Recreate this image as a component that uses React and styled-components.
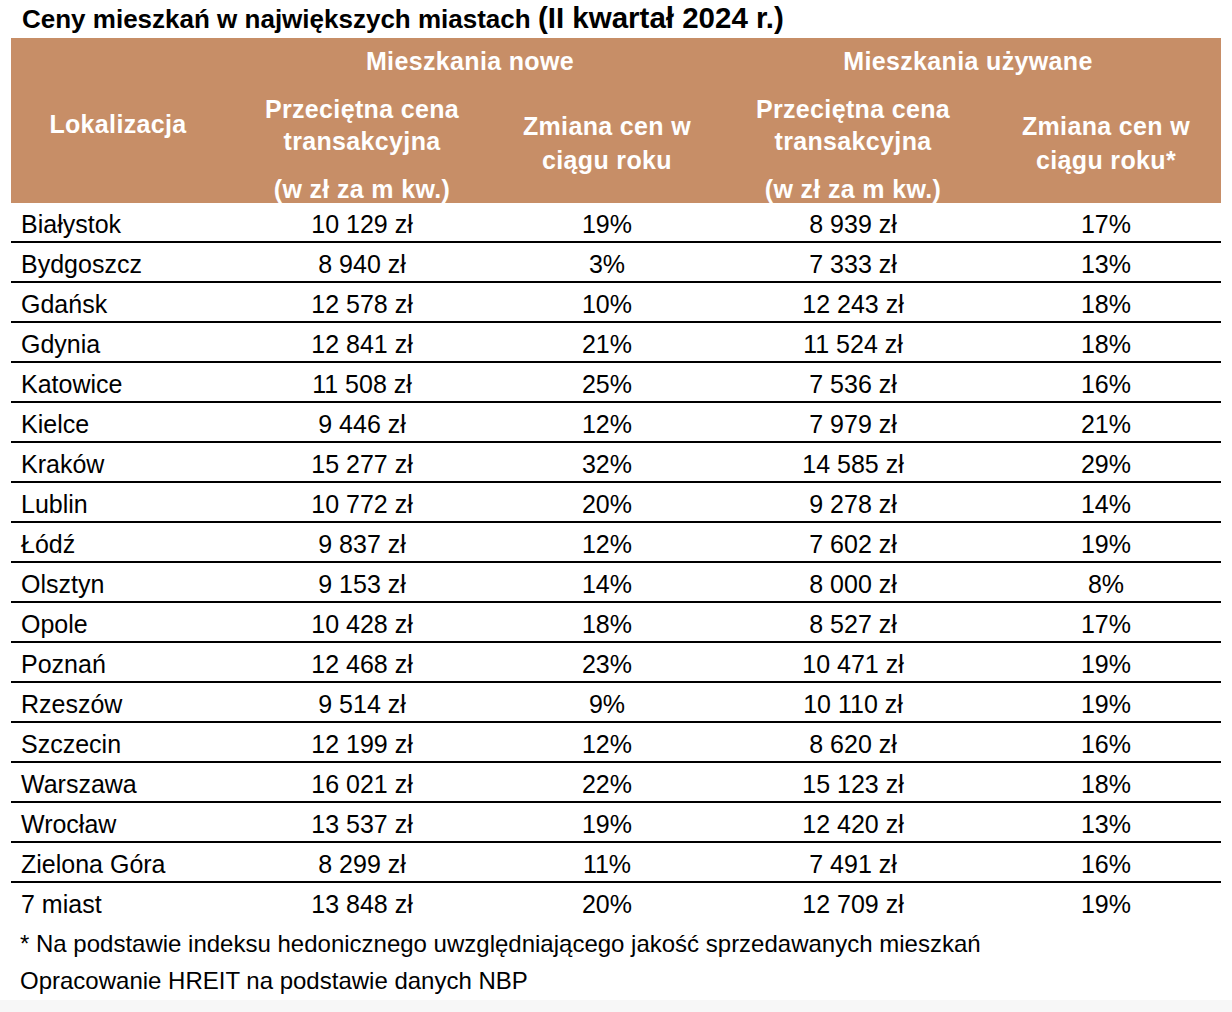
import styled, { createGlobalStyle } from "styled-components";

const GlobalStyle = createGlobalStyle`
  body {
    margin: 0;
    background: linear-gradient(to bottom, #ffffff 1000px, #f7f7f7 1000px);
    font-family: "Liberation Sans", Arial, sans-serif;
    color: #000;
  }
`;

const COLS = "214px 274px 216px 276px 230px";

// Page wrapper
const Page = styled.div`
  width: 1210px;
  padding-left: 11px;
  min-height: 1012px;
  box-sizing: content-box;
`;

const Title = styled.h1`
  margin: 0;
  height: 38px;
  box-sizing: border-box;
  padding: 2px 0 0 11px;
  font-size: 26px;
  line-height: 32px;
  font-weight: 700;
  white-space: nowrap;

  span {
    font-size: 29.5px;
  }
`;

// Tan header block
const Head = styled.div`
  display: grid;
  grid-template-columns: ${COLS};
  grid-template-rows: 44px 121px;
  background: #c78e67;
  color: #fff;
  font-weight: 700;
  font-size: 25px;
  letter-spacing: 0.35px;
`;

const HeadCell = styled.div`
  display: flex;
  flex-direction: column;
  align-items: center;
  justify-content: ${(p) => (p.$top ? "flex-start" : "center")};
  text-align: center;
  line-height: ${(p) => p.$lh || 32}px;
  padding-top: ${(p) => p.$pt || 0}px;
  grid-column: ${(p) => p.$col || "auto"};
  grid-row: ${(p) => p.$row || "auto"};
  white-space: nowrap;
`;

const Unit = styled.div`
  margin-top: 16px;
`;

const Row = styled.div`
  display: grid;
  grid-template-columns: ${COLS};
  height: 40px;
  box-sizing: border-box;
  padding-top: 5px;
  border-bottom: ${(p) => (p.$last ? "none" : "2px solid #000")};
  font-size: 25px;
  line-height: 33px;
`;

const Cell = styled.div`
  text-align: ${(p) => (p.$left ? "left" : "center")};
  padding-left: ${(p) => (p.$left ? "10px" : "0")};
  white-space: nowrap;
`;

const Notes = styled.div`
  padding: 2px 0 0 9px;
  font-size: 24px;
  line-height: 37px;
`;

const rows = [
  ["Białystok", "10 129 zł", "19%", "8 939 zł", "17%"],
  ["Bydgoszcz", "8 940 zł", "3%", "7 333 zł", "13%"],
  ["Gdańsk", "12 578 zł", "10%", "12 243 zł", "18%"],
  ["Gdynia", "12 841 zł", "21%", "11 524 zł", "18%"],
  ["Katowice", "11 508 zł", "25%", "7 536 zł", "16%"],
  ["Kielce", "9 446 zł", "12%", "7 979 zł", "21%"],
  ["Kraków", "15 277 zł", "32%", "14 585 zł", "29%"],
  ["Lublin", "10 772 zł", "20%", "9 278 zł", "14%"],
  ["Łódź", "9 837 zł", "12%", "7 602 zł", "19%"],
  ["Olsztyn", "9 153 zł", "14%", "8 000 zł", "8%"],
  ["Opole", "10 428 zł", "18%", "8 527 zł", "17%"],
  ["Poznań", "12 468 zł", "23%", "10 471 zł", "19%"],
  ["Rzeszów", "9 514 zł", "9%", "10 110 zł", "19%"],
  ["Szczecin", "12 199 zł", "12%", "8 620 zł", "16%"],
  ["Warszawa", "16 021 zł", "22%", "15 123 zł", "18%"],
  ["Wrocław", "13 537 zł", "19%", "12 420 zł", "13%"],
  ["Zielona Góra", "8 299 zł", "11%", "7 491 zł", "16%"],
  ["7 miast", "13 848 zł", "20%", "12 709 zł", "19%"],
];

export default function App() {
  return (
    <Page>
      <GlobalStyle />
      <Title>
        Ceny mieszkań w największych miastach <span>(II kwartał 2024 r.)</span>
      </Title>

      <Head>
        <HeadCell $col="1" $row="1 / span 2" $pt={6}>
          Lokalizacja
        </HeadCell>
        <HeadCell $col="2 / span 2" $row="1" $pt={2}>
          Mieszkania nowe
        </HeadCell>
        <HeadCell $col="4 / span 2" $row="1" $pt={2}>
          Mieszkania używane
        </HeadCell>

        <HeadCell $col="2" $row="2" $top $pt={11}>
          <div>Przeciętna cena</div>
          <div>transakcyjna</div>
          <Unit>(w zł za m kw.)</Unit>
        </HeadCell>
        <HeadCell $col="3" $row="2" $lh={34}>
          <div>Zmiana cen w</div>
          <div>ciągu roku</div>
        </HeadCell>
        <HeadCell $col="4" $row="2" $top $pt={11}>
          <div>Przeciętna cena</div>
          <div>transakcyjna</div>
          <Unit>(w zł za m kw.)</Unit>
        </HeadCell>
        <HeadCell $col="5" $row="2" $lh={34}>
          <div>Zmiana cen w</div>
          <div>ciągu roku*</div>
        </HeadCell>
      </Head>

      {rows.map((r, i) => (
        <Row key={r[0]} $last={i === rows.length - 1}>
          <Cell $left>{r[0]}</Cell>
          <Cell>{r[1]}</Cell>
          <Cell>{r[2]}</Cell>
          <Cell>{r[3]}</Cell>
          <Cell>{r[4]}</Cell>
        </Row>
      ))}

      <Notes>
        <div>* Na podstawie indeksu hedonicznego uwzględniającego jakość sprzedawanych mieszkań</div>
        <div>Opracowanie HREIT na podstawie danych NBP</div>
      </Notes>
    </Page>
  );
}
